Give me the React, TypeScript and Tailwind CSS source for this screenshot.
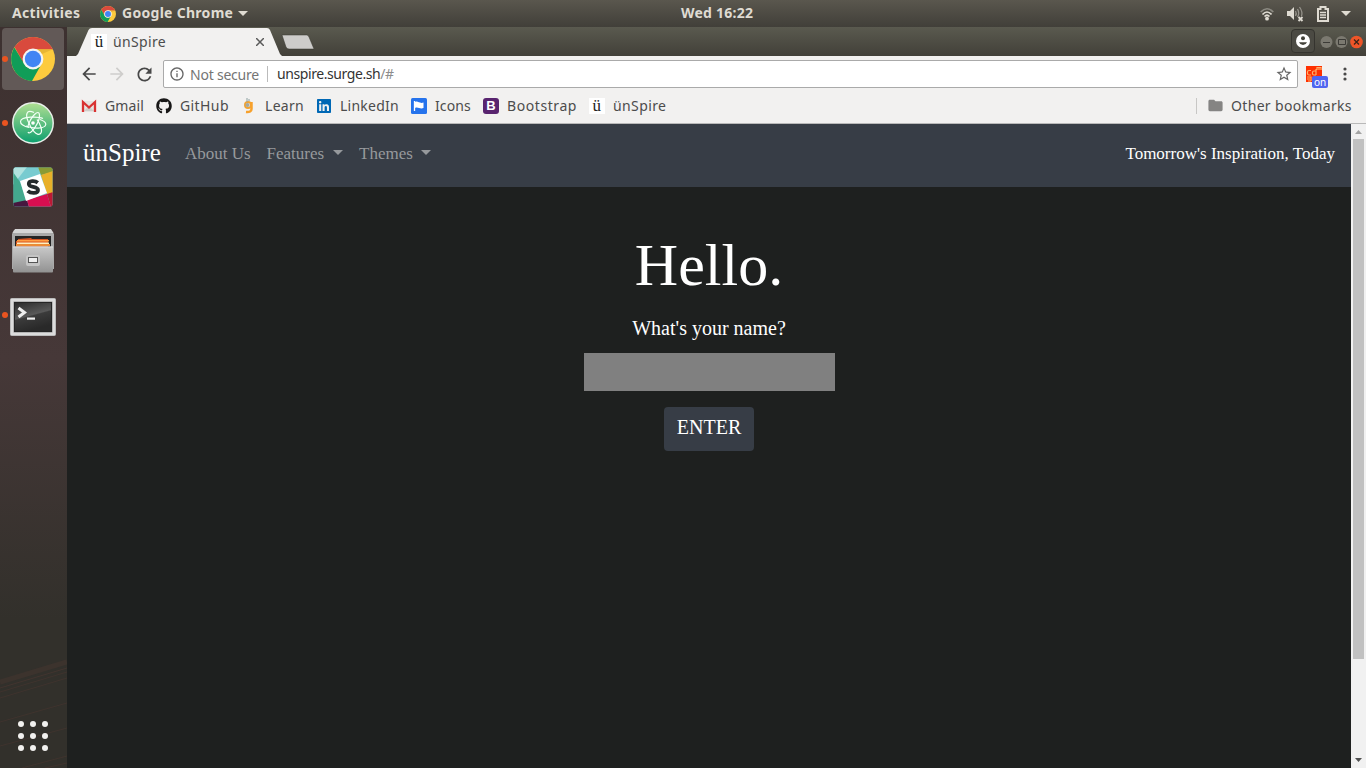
import type { ReactNode } from "react";
import { FaGithub, FaLinkedin } from "react-icons/fa";
import { MdArrowBack, MdArrowForward, MdRefresh, MdInfoOutline, MdStarBorder, MdFolder } from "react-icons/md";

function ChromeLogo({ className }: { className: string }) {
  return (
    <svg viewBox="0 0 44 44" className={className}>
      <circle cx="22" cy="22" r="22" fill="#fdcb3e" />
      <path d="M3 11 A22 22 0 0 1 41 11 L42 12.3 H22 A10 10 0 0 0 12.8 26.5 L3.6 10 Z" fill="#d94a3d" />
      <path d="M3.4 10.5 A22 22 0 0 0 21 44 L30.5 27 A10 10 0 0 1 13 26.5 Z" fill="#109d58" />
      <path d="M22 12.3 H42 L31 17 Z" fill="#dba92e" opacity=".6" />
      <circle cx="22" cy="22" r="10.4" fill="#f4f4f4" />
      <circle cx="22" cy="22" r="8.2" fill="#4285f4" />
    </svg>
  );
}

function AtomLogo() {
  return (
    <svg viewBox="0 0 42 42" className="size-[42px]">
      <defs>
        <linearGradient id="atomBg" x1="0" y1="0" x2="0" y2="1">
          <stop offset="0" stopColor="#b0df92" />
          <stop offset="1" stopColor="#0c9f6e" />
        </linearGradient>
      </defs>
      <circle cx="21" cy="21" r="20.2" fill="url(#atomBg)" stroke="#e9efea" strokeWidth="1.5" />
      <g fill="none" stroke="#f2fff6" strokeWidth="1.2">
        <path d="M31 16.500 C27 14.500 9 14 8.500 19.500 C8.200 22 12 24.500 17 25.500" />
        <path d="M14 24 C21 27 33 27 33.800 22.500 C34 20 31 18.500 28 17.500" />
        <path d="M16 30 C18 34.500 28 20 27.500 13 C27 6 18.500 15 16 24" />
        <path d="M22 10.500 C14 7 13.500 13 16 19 C19 27 25 35 28.500 31.500 C31 29 28.500 22 25 17.500" />
      </g>
      <circle cx="21" cy="21" r="1.800" fill="#fff" />
    </svg>
  );
}

function SlackLogo() {
  return (
    <svg viewBox="0 0 40 40" className="size-10">
      <defs>
        <clipPath id="slackClip"><rect x=".5" y=".5" width="39" height="39" rx="2" /></clipPath>
      </defs>
      <g clipPath="url(#slackClip)">
        <rect width="40" height="40" fill="#6fc5c5" />
        <path d="M0 0 H26 L28 8 L7 15 Z" fill="#78cbd0" />
        <path d="M0 18 V0 L14 0 Z" fill="#b1e2df" />
        <path d="M25 0 H40 V5 L28 8 Z" fill="#899b35" />
        <path d="M40 4 V26 L34 27 L28 8 Z" fill="#e8b029" />
        <path d="M0 5 L7 15 L14 34 L0 39 Z" fill="#43a98e" />
        <path d="M0 36 L14 33 L16 40 H0 Z" fill="#46173f" />
        <path d="M14 33 L34 27 L38 40 H16 Z" fill="#d70e50" />
        <path d="M34 27 L40 25 V40 H38 Z" fill="#bd1935" />
        <path d="M7 14 L27 7 L34 26 L13 34 Z" fill="#fff" />
      </g>
      <path d="M24.800 15.800 C22 13.500 15.800 13.500 15.800 17 C15.800 21 25 18.800 25 23 C25 27 17.500 26.500 14.700 23.800" fill="none" stroke="#252b2d" strokeWidth="3.800" />
    </svg>
  );
}

function FilesLogo() {
  return (
    <svg viewBox="0 0 44 46" className="h-[46px] w-11">
      <defs>
        <linearGradient id="cabinet" x1="0" y1="0" x2="0" y2="1">
          <stop offset="0" stopColor="#c9c9c9" />
          <stop offset="1" stopColor="#929292" />
        </linearGradient>
      </defs>
      <path d="M3 2 H40 L43 6 V41 H1 V6 Z" fill="#aaa" />
      <path d="M4 1 H40 L42.500 5 H1.500 Z" fill="#d6d6d6" />
      <rect x="4" y="8" width="36" height="13" fill="#252525" />
      <path d="M7 11 L20 10 L21 11 H37 V22 H5 V13 H7 Z" fill="#d65522" />
      <rect x="6" y="12" width="32" height="1.500" fill="#ff9e42" />
      <rect x="6" y="14.500" width="32" height="1.500" fill="#fff0c0" />
      <rect x="5" y="16" width="34" height="2" fill="#eb8c37" />
      <rect x="2" y="18.500" width="40" height="26" rx="1" fill="url(#cabinet)" />
      <rect x="2" y="18.500" width="40" height="1" fill="#dedede" />
      <rect x="15" y="27" width="14" height="11" rx="2" fill="#c4c4c4" />
      <rect x="17.500" y="29.500" width="9" height="5" fill="#eee" stroke="#555" />
    </svg>
  );
}

function TerminalLogo() {
  return (
    <svg viewBox="0 0 46 38" className="h-[38px] w-[46px]">
      <defs>
        <linearGradient id="term" x1="0" y1="0" x2=".35" y2="1">
          <stop offset="0" stopColor="#2c2c2c" />
          <stop offset=".52" stopColor="#595959" />
          <stop offset=".56" stopColor="#3b3b3b" />
          <stop offset="1" stopColor="#292929" />
        </linearGradient>
      </defs>
      <rect x=".5" y=".5" width="45" height="37" rx="1" fill="#dcdcdc" stroke="#bbb" />
      <rect x="3.500" y="3.500" width="39" height="31" fill="#8e8e8e" />
      <rect x="4" y="4" width="38" height="30" fill="#252525" />
      <rect x="5" y="5" width="36" height="28" fill="url(#term)" />
      <path d="M8.500 10 L14.500 14.500 L8.500 19" fill="none" stroke="#eee" strokeWidth="3" />
      <rect x="17" y="19.500" width="8" height="2.200" fill="#eee" />
    </svg>
  );
}

function DockItem({ children, running, active }: { children: ReactNode; running?: boolean; active?: boolean }) {
  return (
    <div className="relative h-16 w-[67px] pt-px pl-[2px]">
      <div className={active ? "flex h-[62px] w-[62px] items-center justify-center rounded bg-[#625957]" : "flex h-[62px] w-[62px] items-center justify-center"}>
        {children}
      </div>
      {running && <span className="absolute top-[29px] left-[2px] size-[6px] rounded-full bg-[#e95420]" />}
    </div>
  );
}

function Dock() {
  return (
    <aside className="flex w-[67px] shrink-0 flex-col justify-between bg-linear-to-b from-[#3d3130] via-[#463838] via-45% to-[#32302b] to-80%">
      <div>
        <DockItem running active><ChromeLogo className="size-11" /></DockItem>
        <DockItem running><AtomLogo /></DockItem>
        <DockItem><SlackLogo /></DockItem>
        <DockItem><FilesLogo /></DockItem>
        <DockItem running><div className="pt-[3px]"><TerminalLogo /></div></DockItem>
      </div>
      <div className="relative flex h-[110px] items-end">
        <svg viewBox="0 0 67 110" className="absolute inset-0 h-[110px] w-[67px]" fill="none" stroke="#8b4a40">
          <path d="M0 24 L67 4" opacity=".12" strokeWidth="5" />
          <path d="M0 30 L67 10" opacity=".18" />
          <path d="M0 34 L67 14 M0 40 L67 20" opacity=".14" />
          <path d="M0 64 L67 45 M0 88 L67 70 M22 110 L67 98 M45 110 L67 105" opacity=".14" />
        </svg>
        <div className="relative mb-[17px] ml-[18px] grid grid-cols-3 gap-[6px]">
          {Array.from({ length: 9 }, (_, i) => <span key={i} className="size-[6px] rounded-full bg-[#f2f1ef]" />)}
        </div>
      </div>
    </aside>
  );
}

function TopBar() {
  return (
    <header className="flex h-[27px] shrink-0 items-center bg-linear-to-b from-[#5a574e] to-[#413f39] text-[14px] leading-[25px] font-bold text-[#dfdbd2]">
      <div className="w-[100px] pb-[2px] pl-3 tracking-[0.33px]">Activities</div>
      <ChromeLogo className="size-4" />
      <div className="ml-[6px] w-[111px] pb-[2px] whitespace-nowrap tracking-[0.29px]">Google Chrome</div>
      <svg viewBox="0 0 10 5" className="ml-[5px] h-[5px] w-[10px]"><path d="M0 0H10L5 5Z" fill="#dfdbd2" /></svg>
      <div className="ml-[433px] w-[74px] pb-[2px] whitespace-nowrap tracking-[0.24px]">Wed 16:22</div>
      <div className="ml-auto flex items-center">
        <svg viewBox="0 0 14 14" className="h-[14px] w-[14px]" fill="none">
          <path d="M.7 5 Q7 -1.500 13.300 5" stroke="#8c8a82" strokeWidth="1.700" />
          <path d="M2.500 7.500 Q7 2.500 11.500 7.500 M4.500 9.500 Q7 7 9.500 9.500" stroke="#dfdbd2" strokeWidth="1.700" />
          <circle cx="7" cy="11.700" r="1.900" fill="#dfdbd2" />
        </svg>
        <svg viewBox="0 0 18 16" className="ml-[12px] h-4 w-[18px]" fill="none">
          <path d="M1 5 H4 L8 1 V14 L4 10 H1Z" fill="#dfdbd2" />
          <path d="M9.500 5 Q11 7.500 9.500 10 M11.500 3 Q14 7.500 11.500 11 M13.500 1 Q17 6 15.500 10" stroke="#96938b" strokeWidth="1.300" />
          <path d="M12.500 11 L16.500 15 M16.500 11 L12.500 15" stroke="#dfdbd2" strokeWidth="1.800" />
        </svg>
        <svg viewBox="0 0 12 16" className="ml-[13px] h-4 w-3" fill="none" stroke="#dfdbd2">
          <path d="M3.500 3 V1 H8.500 V3 H11 V15 H1 V3 Z" strokeWidth="2" />
          <path d="M3 6.500 H9 M3 9 H9 M3 11.500 H9" strokeWidth="1.400" />
        </svg>
        <svg viewBox="0 0 10 5" className="mr-[15px] ml-[12px] h-[5px] w-[10px]"><path d="M0 0H10L5 5Z" fill="#dfdbd2" /></svg>
      </div>
    </header>
  );
}

function Favicon() {
  return <span className="flex size-4 shrink-0 items-center justify-center bg-white font-['Liberation_Serif',serif] text-[17px] leading-4 text-[#222]">ü</span>;
}

function TabStrip() {
  return (
    <div className="flex h-[29px] shrink-0 items-start bg-linear-to-b from-[#5a5a4f] to-[#424039]">
      <div className="relative ml-[9px] h-[29px] w-[208px]">
        <svg viewBox="0 0 208 29" className="absolute inset-0 h-[29px] w-[208px]">
          <path d="M0 29 L2 27 L12.500 3 Q13.500 1 16 1 H191 Q193 1 194 3 L204 27 L206 29 Z" fill="#f2f1f0" />
        </svg>
        <div className="relative flex h-[29px] items-center pt-px pl-[15px] text-[14px] text-[#4c4c4c]">
          <Favicon />
          <span className="ml-[6px] w-[143px] pb-[2px] tracking-[0.35px]">ünSpire</span>
          <svg viewBox="0 0 8 8" className="size-2"><path d="M0 0L8 8M8 0L0 8" stroke="#5a5a5a" strokeWidth="1.500" /></svg>
        </div>
      </div>
      <svg viewBox="0 0 33 16" className="mt-[7px] -ml-[3px] h-4 w-[33px]"><path d="M1 1 H26 Q27 1 28 3 L33 15 H8 Q6 15 5 13Z" fill="#cdccca" stroke="#37362f" strokeWidth=".5" /></svg>
      <div className="mt-[2px] mr-[5px] ml-auto flex size-6 items-center justify-center rounded border border-[#35342f] bg-[#4b4a43]">
        <svg viewBox="0 0 14 14" className="size-[14px]"><circle cx="7" cy="7" r="7" fill="#fff" /><circle cx="7" cy="4.200" r="2" fill="#424139" /><path d="M3 8.300H11Q10 11 7 11Q4 11 3 8.300Z" fill="#424139" /></svg>
      </div>
      <svg viewBox="0 0 44 14" className="mt-[8px] mr-[2px] h-[14px] w-[44px]" fill="none">
        <circle cx="6.500" cy="7" r="6" fill="#7b7970" /><path d="M3 7.500H10" stroke="#3c3b37" />
        <circle cx="21.500" cy="7" r="6" fill="#7b7970" /><path d="M18.500 4.500H25.500V9.500H18.500Z" stroke="#3c3b37" />
        <circle cx="36.500" cy="7" r="6.300" fill="#ee5528" /><path d="M34 4.500L39 9.500M39 4.500L34 9.500" stroke="#3c2418" strokeWidth="1.300" />
      </svg>
    </div>
  );
}

function Toolbar() {
  return (
    <div className="flex h-[36px] shrink-0 items-center bg-[#f2f1f0] pl-[12px] text-[14px]">
      <MdArrowBack className="size-5 text-[#484848]" />
      <MdArrowForward className="ml-2 size-5 text-[#cecdcb]" />
      <MdRefresh className="ml-[7px] size-[21px] text-[#484848]" />
      <div className="ml-[8px] flex h-[28px] w-[1135px] items-center rounded-[2px] border border-[#aaa] bg-white pl-[5px]">
        <MdInfoOutline className="size-4 text-[#666]" />
        <span className="ml-[5px] w-[77px] whitespace-nowrap tracking-[-0.22px] text-[#757575]">Not secure</span>
        <span className="mr-[9px] h-4 w-px bg-[#bbb]" />
        <span className="whitespace-nowrap pb-px tracking-[-0.42px] text-[#333]">unspire.surge.sh<span className="text-[#8c8c8c]">/#</span></span>
        <MdStarBorder className="mr-[4px] ml-auto size-[18px] text-[#666]" />
      </div>
      <div className="relative ml-[8px] h-[22px] w-[22px] pt-[3px]">
        <svg viewBox="0 0 16 16" className="size-4" fill="none"><rect width="16" height="16" fill="#ff3000" /><g stroke="#ffb06a" strokeWidth="1.200"><path d="M5 4.500H3Q1.500 4.500 1.500 6V7.500Q1.500 9 3 9H5M10 3V9M10 5H8Q6.500 5 6.500 6.500V7.500Q6.500 9 8 9H10M11 4V1.500H15V4M13 2V4M1 11H5V15M1 13H4M2 15H5" /></g></svg>
        <span className="absolute top-[13px] left-[6px] h-[12px] w-4 rounded-[2px] bg-[#5065f0] text-center text-[10px] leading-[12px] text-white">on</span>
      </div>
      <svg viewBox="0 0 4 14" className="ml-[15px] h-[14px] w-1" fill="#484848"><circle cx="2" cy="2" r="1.600" /><circle cx="2" cy="7" r="1.600" /><circle cx="2" cy="12" r="1.600" /></svg>
    </div>
  );
}

function Bookmark({ icon, label, className }: { icon: ReactNode; label: string; className: string }) {
  return <div className={"flex shrink-0 items-center gap-2 whitespace-nowrap " + className}>{icon}<span>{label}</span></div>;
}

function Bookmarks() {
  return (
    <div className="flex h-8 shrink-0 items-center border-b border-[#b9b9b9] bg-[#f2f1f0] pr-[14px] pb-[4px] pl-[14px] text-[14px] leading-[20px] text-[#4c4c4c]">
      <Bookmark className="w-[75px] tracking-[0.15px]" label="Gmail" icon={
        <svg viewBox="0 0 16 16" className="size-4"><path d="M1 3H15V14H1Z" fill="#e6e4e2" /><path d="M3 13L8 8L13 13" fill="#cfcdca" /><path d="M2 14V4L8 9.500L14 4V14" fill="none" stroke="#d93232" strokeWidth="2.300" /></svg>
      } />
      <Bookmark className="w-[85px] tracking-[0.4px]" label="GitHub" icon={<FaGithub className="size-4 text-[#181717]" />} />
      <Bookmark className="w-[75px] tracking-[0.3px]" label="Learn" icon={
        <svg viewBox="0 0 16 16" className="size-4" fill="none"><circle cx="7" cy="7" r="3" stroke="#f0a333" strokeWidth="2" /><path d="M10.500 4V11Q10.500 14.500 5 14" stroke="#f7a12c" strokeWidth="2.500" /><path d="M6 0V4M8 1V3" stroke="#8ca0a0" /><circle cx="6.500" cy="7" r="2" fill="#a4a8a0" /></svg>
      } />
      <Bookmark className="w-[95px] tracking-[0.25px]" label="LinkedIn" icon={
        <span className="flex size-4 justify-center"><FaLinkedin className="size-4 text-[#0068b5]" /></span>
      } />
      <Bookmark className="w-[72px] tracking-[0.1px]" label="Icons" icon={
        <svg viewBox="0 0 16 16" className="size-4"><rect width="16" height="16" rx="1.500" fill="#2673ec" /><path d="M3.500 3V13" stroke="#fff" strokeWidth="1.300" /><path d="M4 4C7 2.500 8.500 6 12.500 4.500V10C9 11.500 7 8.500 4 10Z" fill="#fff" /></svg>
      } />
      <Bookmark className="w-[106px] tracking-[0.58px]" label="Bootstrap" icon={<span className="flex size-4 items-center justify-center rounded-[3px] bg-[#59246f] font-['Liberation_Sans',sans-serif] text-[13px] leading-4 font-bold tracking-normal text-white">B</span>} />
      <Bookmark className="w-[85px] tracking-[0.4px]" label="ünSpire" icon={<Favicon />} />
      <div className="ml-auto flex items-center whitespace-nowrap">
        <span className="mr-[10px] h-4 w-px bg-[#c8c7c5]" />
        <MdFolder className="size-[17px] text-[#858483]" />
        <span className="ml-[7px] w-[121px] tracking-[0.33px]">Other bookmarks</span>
      </div>
    </div>
  );
}

function Caret({ className }: { className: string }) {
  return <svg viewBox="0 0 10 5" className={"h-[5px] w-[10px] " + className}><path d="M0 0H10L5 5Z" fill="currentColor" /></svg>;
}

function WebPage() {
  return (
    <main className="min-w-0 flex-1 bg-[#1e201f] font-['Liberation_Serif',serif] text-white">
      <nav className="flex h-[63px] items-center bg-[#373d46] px-4 pb-[3px] text-[17px] text-[#96999c]">
        <a className="w-[102px] pb-[2px] text-[25px] leading-[30px] text-white">ünSpire</a>
        <a className="w-[81.500px] whitespace-nowrap">About Us</a>
        <a className="flex w-[92.500px] items-center">Features<Caret className="mb-[3px] ml-[8.500px]" /></a>
        <a className="flex items-center">Themes<Caret className="mb-[3px] ml-[8px]" /></a>
        <span className="ml-auto whitespace-nowrap text-white">Tomorrow's Inspiration, Today</span>
      </nav>
      <section className="flex flex-col items-center pt-[42px]">
        <h1 className="text-[60px] leading-[72px]">Hello.</h1>
        <label htmlFor="name" className="mt-[12px] text-[20px] leading-[30px]">What's your name?</label>
        <input id="name" className="mt-[10px] h-[38px] w-[251px] bg-[#808080] outline-none" />
        <button className="mt-4 h-[44px] w-[90px] rounded bg-[#373d46] pb-[5px] text-[20px] leading-[30px]">ENTER</button>
      </section>
    </main>
  );
}

export default function App() {
  return (
    <div className="flex h-[768px] w-[1366px] flex-col overflow-hidden bg-[#1e201f] font-['Noto_Sans',sans-serif]">
      <TopBar />
      <div className="flex min-h-0 flex-1">
        <Dock />
        <div className="flex min-w-0 flex-1 flex-col">
          <TabStrip />
          <Toolbar />
          <Bookmarks />
          <div className="flex min-h-0 flex-1">
            <WebPage />
            <div className="flex w-[15px] shrink-0 flex-col items-center bg-[#f1f1f1]">
              <svg viewBox="0 0 15 15" className="size-[15px] shrink-0"><path d="M4 10H11L7.500 6Z" fill="#a3a3a3" /></svg>
              <div className="h-[520px] w-[11px] bg-[#c1c1c1]" />
              <svg viewBox="0 0 15 15" className="mt-auto size-[15px] shrink-0"><path d="M4 5H11L7.500 9Z" fill="#505050" /></svg>
            </div>
          </div>
        </div>
      </div>
    </div>
  );
}
